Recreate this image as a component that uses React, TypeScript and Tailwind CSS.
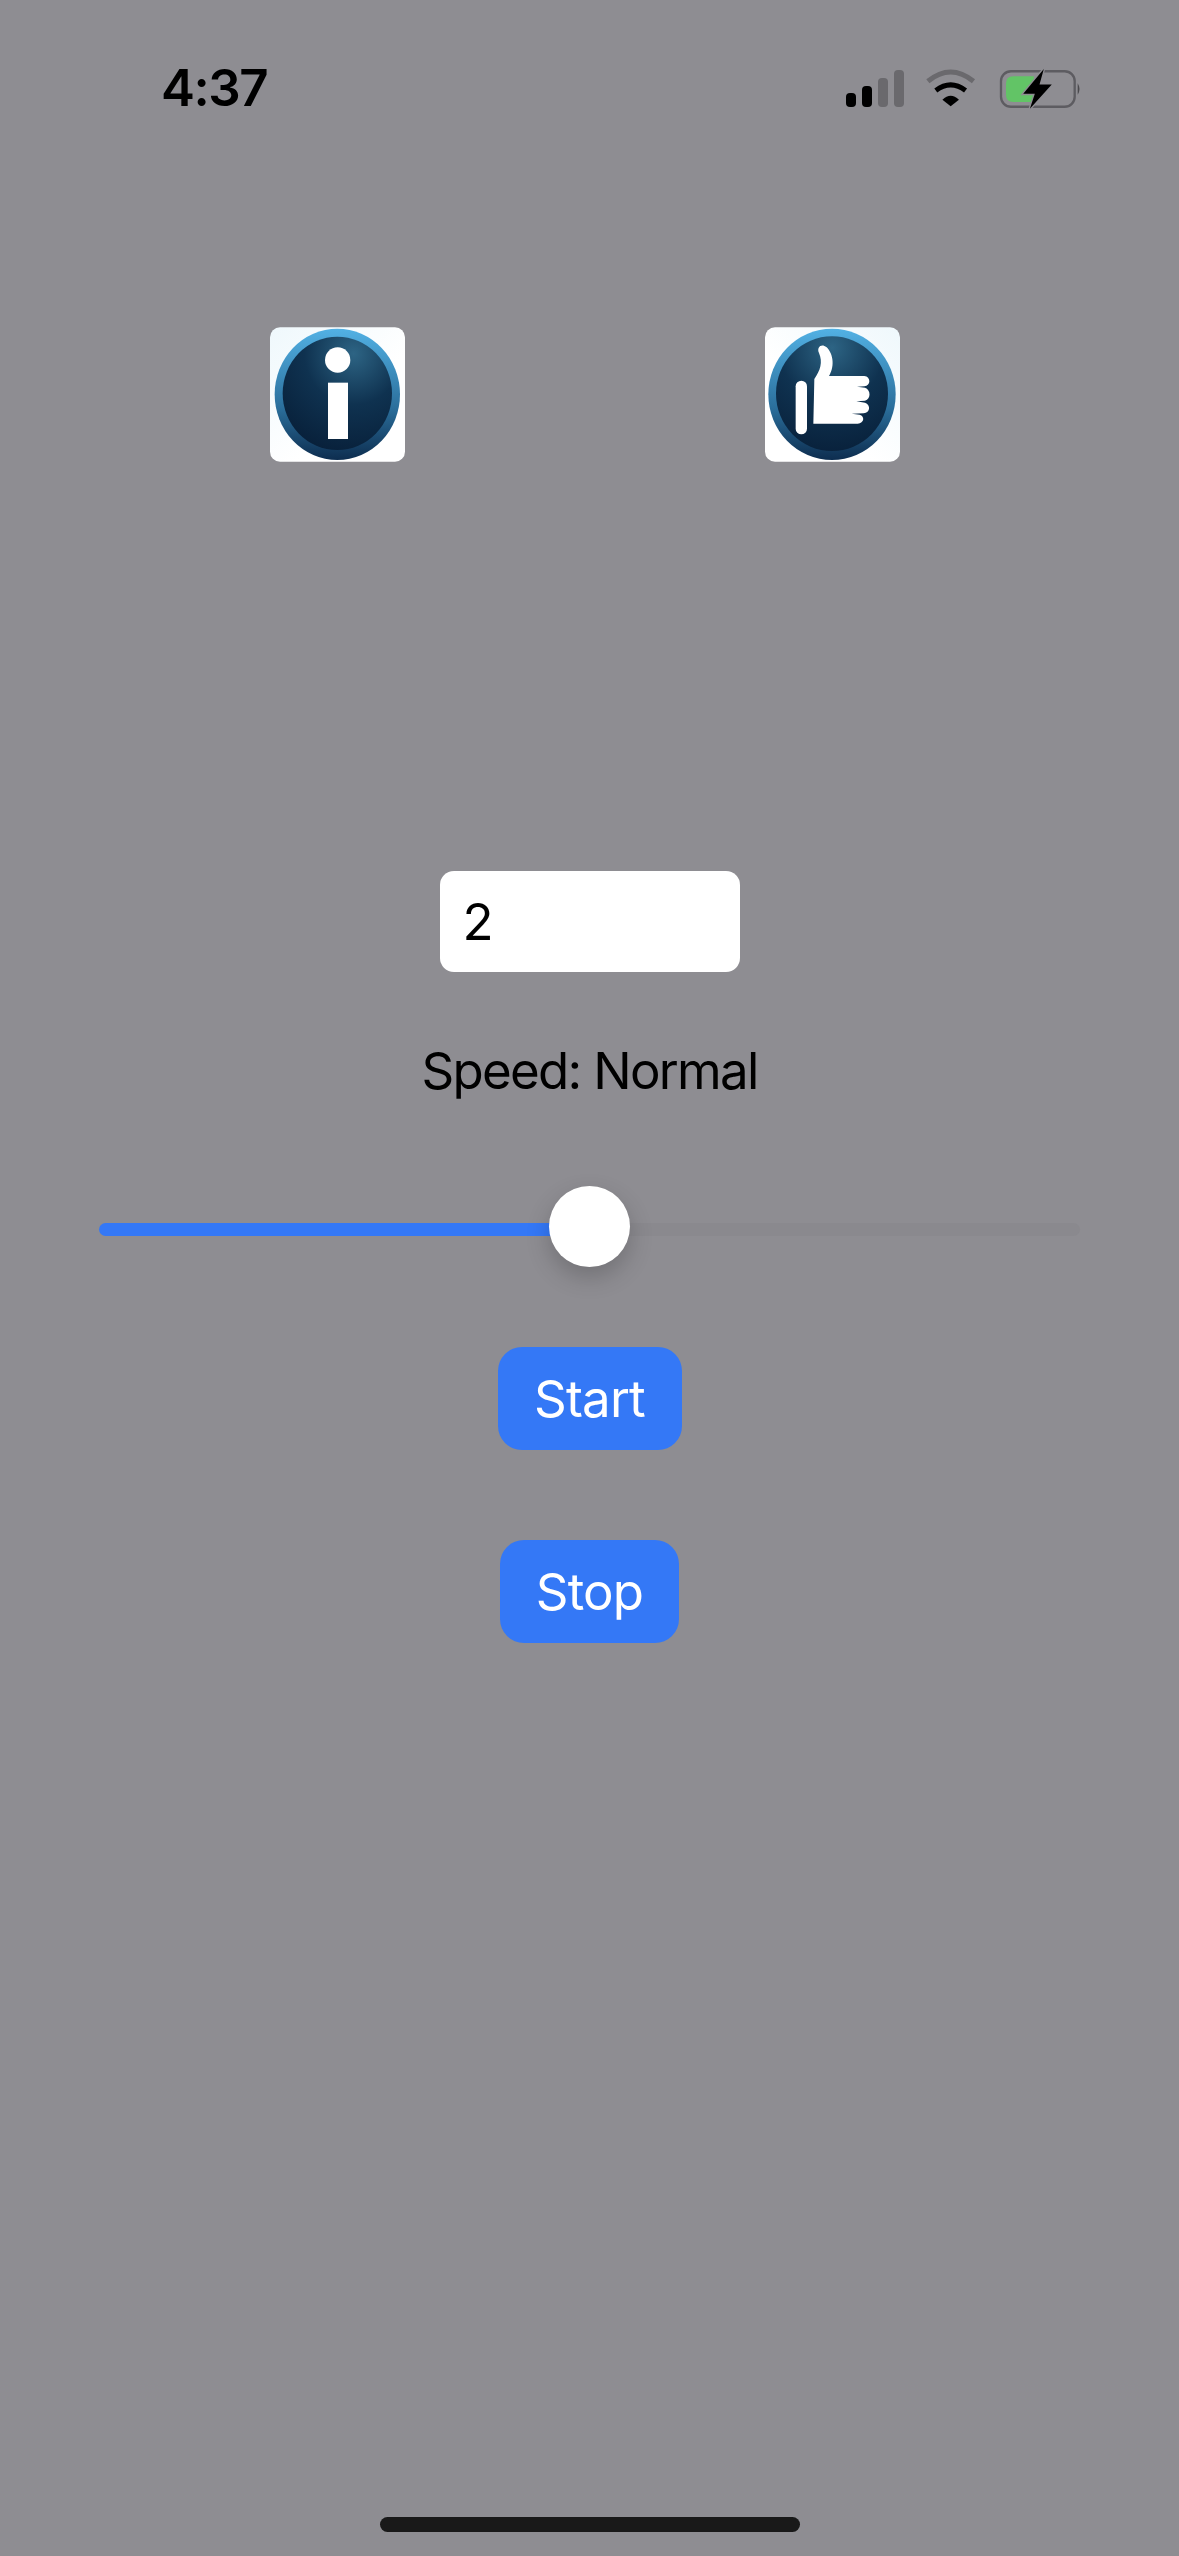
const InfoIcon = () => (
  <svg viewBox="30 37 405 403" className="w-[135px] h-[135px]">
    <defs>
      <linearGradient id="infoTile" x1="0" y1="0" x2="1" y2="1">
        <stop offset="0" stopColor="#eff8fc" />
        <stop offset="0.6" stopColor="#ffffff" />
      </linearGradient>
      <linearGradient id="infoRing" x1="0" y1="0" x2="0" y2="1">
        <stop offset="0" stopColor="#52b1e4" />
        <stop offset="0.6" stopColor="#2b6f9c" />
        <stop offset="1" stopColor="#0d2d4f" />
      </linearGradient>
      <radialGradient id="infoFace" cx="0.65" cy="0.15" r="0.9">
        <stop offset="0" stopColor="#2d6484" />
        <stop offset="0.5" stopColor="#0f3250" />
        <stop offset="1" stopColor="#08203a" />
      </radialGradient>
    </defs>
    <rect x="30" y="37" width="405" height="403" rx="30" fill="url(#infoTile)" />
    <ellipse cx="232" cy="238" rx="188" ry="197" fill="url(#infoRing)" />
    <ellipse cx="232" cy="235" rx="164" ry="170" fill="url(#infoFace)" />
    <circle cx="233" cy="135" r="38" fill="#ffffff" />
    <rect x="204" y="203" width="60" height="169" fill="#ffffff" />
  </svg>
)

const ThumbIcon = () => (
  <svg viewBox="30 37 405 403" className="w-[135px] h-[135px]">
    <defs>
      <linearGradient id="thumbTile" x1="0" y1="1" x2="1" y2="0">
        <stop offset="0.4" stopColor="#ffffff" />
        <stop offset="1" stopColor="#eff8fc" />
      </linearGradient>
      <linearGradient id="thumbRing" x1="0" y1="0" x2="0" y2="1">
        <stop offset="0" stopColor="#52b1e4" />
        <stop offset="0.6" stopColor="#2b6f9c" />
        <stop offset="1" stopColor="#0d2d4f" />
      </linearGradient>
      <radialGradient id="thumbFace" cx="0.5" cy="0.1" r="0.95">
        <stop offset="0" stopColor="#2d6484" />
        <stop offset="0.5" stopColor="#0f3250" />
        <stop offset="1" stopColor="#08203a" />
      </radialGradient>
    </defs>
    <rect x="30" y="37" width="405" height="403" rx="30" fill="url(#thumbTile)" />
    <ellipse cx="231" cy="238" rx="191" ry="197" fill="url(#thumbRing)" />
    <ellipse cx="231" cy="236" rx="168" ry="172" fill="url(#thumbFace)" />
    <rect x="122" y="197" width="34" height="161" rx="17" fill="#ffffff" />
    <path
      fill="#ffffff"
      d="M175 326 L178 192 C196 166 204 142 192 114 C184 96 200 84 214 96 C232 112 242 150 222 183 L328 183 C348 185 348 212 328 214 L306 215 L330 218 C348 224 348 252 330 257 L304 259 L330 263 C348 270 346 292 326 295 L290 296 L314 299 C330 304 328 324 308 326 Z"
    />
  </svg>
)

const SignalIcon = () => (
  <svg viewBox="0 0 58 37" className="w-[58px] h-[37px]">
    <rect x="0" y="23" width="10" height="14" rx="4" fill="#000000" />
    <rect x="16" y="16" width="10" height="21" rx="4" fill="#000000" />
    <rect x="32" y="8" width="10" height="29" rx="4" fill="#6a696d" />
    <rect x="48" y="0" width="10" height="37" rx="4" fill="#6a696d" />
  </svg>
)

const WifiIcon = () => (
  <svg viewBox="318 55 156 115" className="w-[52px] h-[38px]">
    <path d="M326 92 Q395 36 464 92" fill="none" stroke="#6a696d" strokeWidth="15" />
    <path d="M350 120 Q395 86 440 120" fill="none" stroke="#000000" strokeWidth="15" />
    <path d="M370 148 Q395 124 420 148 L395 168 Z" fill="#000000" />
  </svg>
)

const BatteryIcon = () => (
  <svg viewBox="535 50 250 122" className="w-[83px] h-[41px]">
    <rect x="541" y="59" width="222" height="107" rx="30" fill="none" stroke="#5d5c61" strokeWidth="7" />
    <path d="M578 74 L640 74 L640 152 L578 152 Q556 152 556 130 L556 96 Q556 74 578 74 Z" fill="#62c466" />
    <path d="M670 52 L608 127 L643 127 L628 172 L694 99 L657 99 Z" fill="#000000" stroke="#8e8d92" strokeWidth="8" paintOrder="stroke" />
    <path d="M772 95 Q783 112 772 130 Z" fill="#4a494d" />
  </svg>
)

const App = () => {
  return (
    <div className="w-[1179px] h-[2556px] bg-[#8e8d92] flex flex-col font-['Inter',sans-serif] text-black overflow-hidden">
      {/* Status bar */}
      <div className="mt-[68px] pl-[161px] pr-[97px] h-[40px] flex items-center justify-between">
        <span className="text-[51px] leading-[40px] font-semibold tracking-[-1.5px]">4:37</span>
        <div className="flex items-center">
          <SignalIcon />
          <div className="ml-[21px]"><WifiIcon /></div>
          <div className="ml-[22px]"><BatteryIcon /></div>
        </div>
      </div>

      {/* Top icons */}
      <div className="mt-[219px] pl-[270px] flex gap-[360px]">
        <InfoIcon />
        <ThumbIcon />
      </div>

      <div className="mt-[409px] flex flex-col items-center">
        <div className="w-[300px] h-[101px] bg-white rounded-[14px] pl-[23px] pt-[2px] flex items-center text-[51px]">2</div>
        <p className="mt-[69px] h-[60px] leading-[60px] text-[51px] tracking-[-1.7px]">Speed: Normal</p>

        {/* Slider */}
        <div className="mt-[85px] w-[981px] h-[81px] flex items-center">
          <div className="flex-1 h-[13px] -mr-[4px] mt-[6px] rounded-l-full bg-[#3478f6]"></div>
          <div className="relative z-10 w-[81px] h-[81px] rounded-full bg-white shadow-[0_10px_24px_rgba(0,0,0,0.2)]"></div>
          <div className="flex-1 h-[13px] -ml-[4px] mt-[6px] rounded-r-full bg-[#8a898e]"></div>
        </div>

        <button className="mt-[80px] w-[184px] h-[103px] pt-[2px] rounded-[24px] bg-[#3478f6] text-white text-[51px] tracking-[-0.8px]">Start</button>
        <button className="mt-[90px] w-[179px] h-[103px] pt-[2px] rounded-[24px] bg-[#3478f6] text-white text-[51px] tracking-[-0.8px]">Stop</button>
      </div>

      {/* Home indicator */}
      <div className="mt-auto mb-[24px] self-center w-[420px] h-[15px] rounded-full bg-[#191919]"></div>
    </div>
  )
}

export default App
